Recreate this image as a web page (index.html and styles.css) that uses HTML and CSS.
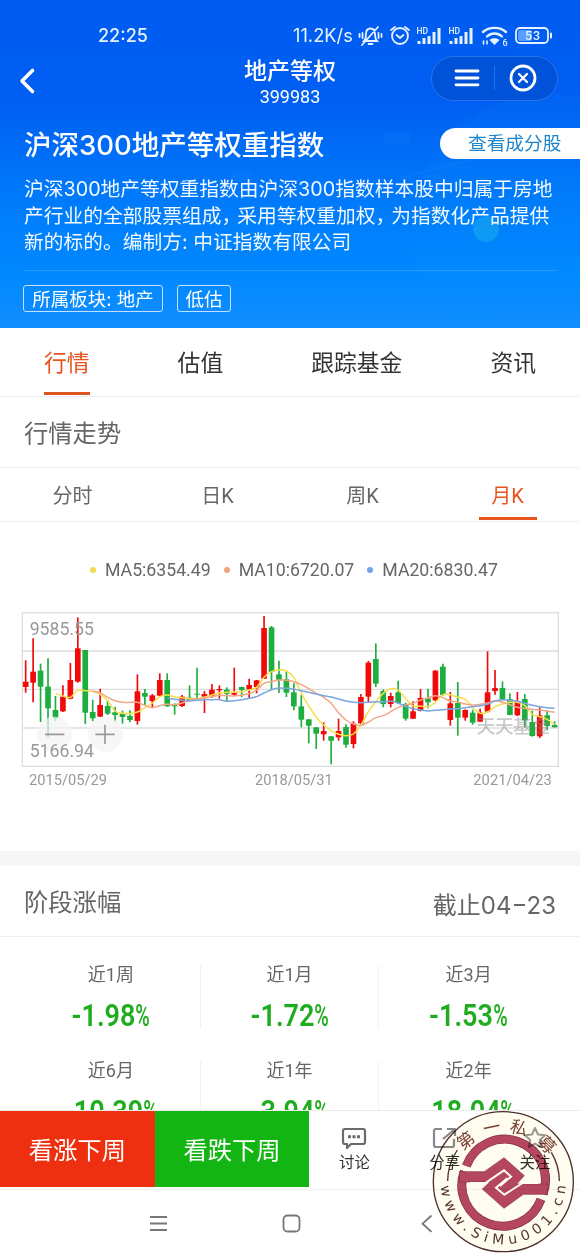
FILE: index.html
```html
<!DOCTYPE html>
<html lang="zh-CN">
<head>
    <meta charset="UTF-8">
    <meta name="viewport" content="width=device-width, initial-scale=1.0">
    <title>地产等权 399983</title>
    <link rel="stylesheet" href="styles.css">
</head>
<body>

    <header class="hero">
        <svg class="hero-bg" width="580" height="328" viewBox="0 0 580 328">
            <circle cx="548" cy="230" r="136" fill="#0a92ff" opacity="0.1"/>
            <circle cx="486" cy="229" r="13" fill="#12a4f0" opacity="0.7"/>
            <path d="M400 178L580 132" stroke="#2a90ff" stroke-width="1" opacity="0.3"/>
            <path d="M384 132h26v12h-26zM232 171h20v10h-20z" fill="#1480ff" opacity="0.2"/>
        </svg>

        <div class="status-bar">
            <span class="clock">22:25</span>
            <span class="speed">11.2K/s</span>
            <svg class="status-icons" width="200" height="24" viewBox="0 0 200 24" fill="none" stroke="#e6f2ff" stroke-width="1.8" stroke-linecap="round">
                <!-- muted bell -->
                <path d="M6 18c2-2 2-4 2-7 0-4 2-5.500 4.500-5.500S17 7 17 11c0 3 0 5 2 7zM10.500 21h4M4 22L20 4M4.500 10v5M1.500 11v3M20.500 10v5M23.500 11v3"/>
                <!-- alarm -->
                <circle cx="42" cy="13" r="8"/>
                <path d="M38.500 12l3.500 3 3.500-3M33 7l4-3M51 7l-4-3"/>
                <!-- signal -->
                <path stroke-width="3" stroke-linecap="butt" d="M61 21v-3M66 21v-6M71 21v-8M76 21V9M81 21V5M93 21v-3M98 21v-6M103 21v-8M108 21V9M113 21V5"/>
                <!-- wifi -->
                <path stroke-width="2.400" d="M125 9c6-5.500 17-5.500 23 0M129 13.500c4-4 11-4 15 0"/>
                <path stroke="none" fill="#e6f2ff" d="M131.500 17c2.500-2.500 7.500-2.500 10 0L136.500 22z"/>
                <path stroke-width="1.600" d="M125.500 18v3M129 21v-3"/>
                <!-- battery -->
                <rect x="158" y="5" width="32" height="15" rx="4"/>
                <rect x="160" y="7" width="14" height="11" rx="2" fill="#5b9dff" stroke="none"/>
                <path d="M193 10.500v4" stroke-width="2"/>
                <g class="status-text" stroke="none" fill="#e6f2ff">
                    <text x="58.500" y="10.500" font-size="8.500">HD</text>
                    <text x="90.500" y="10.500" font-size="8.500">HD</text>
                    <text x="144.500" y="22.500" font-size="9">6</text>
                    <text x="167" y="17" font-size="12.500" textLength="15">53</text>
                </g>
            </svg>
        </div>

        <div class="nav">
            <svg class="back" width="18" height="28" viewBox="0 0 18 28" fill="none" stroke="#fff" stroke-width="3.600" stroke-linecap="round" stroke-linejoin="round">
                <path d="M14.500 3.500L4 14l10.500 10.500"/>
            </svg>
            <div class="nav-title">
                <h1>地产等权</h1>
                <p>399983</p>
            </div>
            <div class="capsule">
                <svg width="26" height="18" viewBox="0 0 26 18" stroke="#fff" stroke-width="2.800" stroke-linecap="round">
                    <path d="M2 2h22M2 9h22M2 15.800h22"/>
                </svg>
                <i></i>
                <svg width="28" height="28" viewBox="0 0 28 28" fill="none" stroke="#fff" stroke-linecap="round">
                    <circle cx="14" cy="14" r="12" stroke-width="2.800"/>
                    <path d="M10 10l8 8M18 10l-8 8" stroke-width="2.200"/>
                </svg>
            </div>
        </div>

        <div class="index-head">
            <h2>沪深300地产等权重指数</h2>
            <a class="stocks-btn">查看成分股</a>
        </div>
        <p class="desc">沪深300地产等权重指数由沪深300指数样本股中归属于房地<br>产行业的全部股票组成<span class="comma">，</span>采用等权重加权<span class="comma">，</span>为指数化产品提供<br>新的标的。编制方: 中证指数有限公司</p>
        <div class="tags">
            <span class="tag tag-plate">所属板块: 地产</span>
            <span class="tag tag-low">低估</span>
        </div>
    </header>

    <nav class="tabs">
        <a class="active">行情</a>
        <a>估值</a>
        <a>跟踪基金</a>
        <a>资讯</a>
    </nav>

    <section class="trend">
        <h3>行情走势</h3>
        <div class="periods">
            <a>分时</a>
            <a>日K</a>
            <a>周K</a>
            <a class="active"><span>月K</span></a>
        </div>
        <div class="legend">
            <span class="ma5">MA5:6354.49</span>
            <span class="ma10">MA10:6720.07</span>
            <span class="ma20">MA20:6830.47</span>
        </div>
        <svg class="chart" width="580" height="200" viewBox="0 0 1740 600">
            <g stroke="#dedede" stroke-width="4" fill="none">
                <rect x="67" y="38" width="1608" height="461"/>
                <path d="M67 153H1675M67 268H1675M67 384H1675"/>
            </g>
            <g id="candles"></g>
            <g id="lines" fill="none" stroke-width="4.500" stroke-linejoin="round"></g>
            <g stroke="#999" stroke-width="5">
                <circle cx="163" cy="403" r="53" fill="#f4f4f4" fill-opacity="0.7" stroke="none"/>
                <circle cx="315" cy="403" r="53" fill="#f4f4f4" fill-opacity="0.7" stroke="none"/>
                <path d="M135 403h58M286 403h58M315 374v58"/>
            </g>
            <g class="axis">
                <text x="89" y="104" font-size="54" textLength="193" lengthAdjust="spacingAndGlyphs">9585.55</text>
                <text x="89" y="472" font-size="54" textLength="193" lengthAdjust="spacingAndGlyphs">5166.94</text>
            </g>
            <text class="brand" x="1430" y="398" font-size="56" textLength="220">天天基金</text>
            <g class="dates">
                <text x="87" y="556" font-size="44" textLength="234">2015/05/29</text>
                <text x="765" y="556" font-size="44" textLength="233">2018/05/31</text>
                <text x="1420" y="556" font-size="44" textLength="235">2021/04/23</text>
            </g>
        </svg>
    </section>

    <section class="stage">
        <div class="stage-head">
            <h3>阶段涨幅</h3>
            <span>截止04−23</span>
        </div>
        <div class="stage-grid">
            <div class="cell"><p>近1周</p><b>-1.98<i>%</i></b></div>
            <div class="cell"><p>近1月</p><b>-1.72<i>%</i></b></div>
            <div class="cell"><p>近3月</p><b>-1.53<i>%</i></b></div>
            <div class="cell"><p>近6月</p><b>-10.39<i>%</i></b></div>
            <div class="cell"><p>近1年</p><b>-3.94<i>%</i></b></div>
            <div class="cell"><p>近2年</p><b>-18.04<i>%</i></b></div>
        </div>
    </section>

    <footer class="bottom">
        <div class="actions">
            <button class="vote up">看涨下周</button>
            <button class="vote down">看跌下周</button>
            <a class="action">
                <svg width="28" height="26" viewBox="0 0 28 26" fill="none" stroke="#6b6b6b" stroke-width="2.200" stroke-linejoin="round">
                    <path d="M5 4h18a2 2 0 0 1 2 2v11a2 2 0 0 1-2 2H11l-4 4v-4H5a2 2 0 0 1-2-2V6a2 2 0 0 1 2-2z"/>
                    <path d="M8 11.800h3M12.500 11.800h3M17 11.800h3" stroke-width="3"/>
                </svg>
                讨论
            </a>
            <a class="action">
                <svg width="28" height="26" viewBox="0 0 28 26" fill="none" stroke="#888" stroke-width="2.200" stroke-linejoin="round">
                    <path d="M11 4H5a2 2 0 0 0-2 2v14a2 2 0 0 0 2 2h16a2 2 0 0 0 2-2v-6M16 4h8v7M24 4L12 14"/>
                </svg>
                分享
            </a>
            <a class="action">
                <svg width="28" height="26" viewBox="0 0 28 26" fill="none" stroke="#999" stroke-width="2" stroke-linejoin="round">
                    <path d="M14 3l3 6.500 7 .8-5.200 4.800 1.400 7L14 18.600 7.800 22l1.400-7L4 10.300l7-.8z"/>
                </svg>
                关注
            </a>
        </div>
        <div class="sys-nav">
            <svg width="580" height="67" viewBox="0 0 580 67" fill="none" stroke="#777" stroke-width="1.800">
                <path d="M150 27h17M150 33.500h17M150 40h17"/>
                <rect x="283.500" y="25.500" width="16" height="16" rx="4"/>
                <path d="M431.500 25.500l-9 8.200 9 8.200"/>
            </svg>
        </div>
    </footer>

    <svg class="seal" width="160" height="162" viewBox="0 0 480 486">
        <defs>
            <path id="seal-arc" d="M62 260A188 188 0 0 0 438 260"/>
        </defs>
        <circle cx="250" cy="260" r="210" fill="#fffdf0" stroke="#4c2f2a" stroke-width="4"/>
        <path d="M83 258A168 168 0 0 1 112 165M418 258A168 168 0 0 0 394 172" fill="none" stroke="#4c2f2a" stroke-width="4"/>
        <!-- coin: ring halves, then the band with the diamond -->
        <g fill="none" stroke="#7c3043" stroke-width="27">
            <path d="M139 213A122 122 0 0 1 369 297"/>
            <path d="M363 313A122 122 0 0 1 133 229"/>
        </g>
        <g fill="none" stroke="#b4475f" stroke-width="23">
            <path d="M139 213A122 122 0 0 1 369 297"/>
            <path d="M363 313A122 122 0 0 1 133 229"/>
        </g>
        <path fill="#b4475f" stroke="#8a354a" stroke-width="2" d="M119 230H193L252 188L313 242L290 267H385L382 298H310L252 340L187 282L210 261H118Z"/>
        <g fill="none" stroke="#fffdf0" stroke-width="6">
            <path d="M150 264H196L252 226L273 245L240 273"/>
            <path d="M356 264H308L253 299L228 278L262 250"/>
        </g>
        <g class="seal-cn">
            <text transform="translate(137 136) rotate(-38)" y="19">第</text>
            <text transform="translate(215 97) rotate(-12)" y="19">一</text>
            <text transform="translate(297 98) rotate(15)" y="19">私</text>
            <text transform="translate(381 149) rotate(45)" y="19">募</text>
        </g>
        <text class="seal-url"><textPath href="#seal-arc" startOffset="14" textLength="564">www.SiMu001.cn</textPath></text>
    </svg>

    <script src="chart.js"></script>
</body>
</html>
```

FILE: styles.css
```css
* {
    box-sizing: border-box;
    margin: 0;
    padding: 0;
}

body {
    width: 580px;
    height: 1257px;
    display: flex;
    flex-direction: column;
    overflow: hidden;
    position: relative;
    background: #fff;
    color: #333;
    font-family: Roboto, "Noto Sans CJK SC", sans-serif;
}

h1, h2, h3 {
    font-weight: 400;
}

/* Blue header */
.hero {
    height: 328px;
    flex: none;
    position: relative;
    color: #fff;
    background: linear-gradient(#005cf0 0, #005ef2 100px, #0078fa 190px, #0088ff 270px, #128eff 328px);
    font-family: Inter, "Noto Sans CJK SC", sans-serif;
}

.hero-bg {
    position: absolute;
    left: 0;
    top: 0;
}

.hero > div,
.hero > p {
    position: relative;
}

.status-bar {
    height: 56px;
    padding: 14px 0 0 98px;
    display: flex;
    align-items: center;
    color: #e6f2ff;
}

.clock {
    width: 195px;
    font-size: 18px;
    font-weight: 500;
}

.speed {
    width: 65px;
    font-size: 18.3px;
    white-space: nowrap;
}

.status-text {
    font-family: Roboto, sans-serif;
    font-weight: 500;
}

.nav {
    height: 46px;
    display: flex;
    align-items: center;
}

.back {
    margin: 4px 0 0 18px;
}

.nav-title {
    width: 200px;
    margin: 7px 0 0 154px;
    text-align: center;
}

.nav-title h1 {
    font-size: 23px;
    line-height: 28px;
    font-weight: 500;
}

.nav-title p {
    font-family: Roboto, sans-serif;
    font-size: 18px;
    line-height: 24px;
}

.capsule {
    width: 127px;
    height: 45px;
    margin: -2px 0 0 41px;
    padding: 0 20px 0 22px;
    display: flex;
    align-items: center;
    justify-content: space-between;
    border: 1px solid #2a73e8;
    border-radius: 23px;
    background: #0053d8;
}

.capsule i {
    width: 1px;
    height: 24px;
    background: #2a73e8;
}

.index-head {
    height: 74px;
    padding: 26px 0 0 24px;
    display: flex;
    justify-content: space-between;
    align-items: flex-start;
}

.index-head h2 {
    font-size: 27.5px;
    line-height: 34px;
    font-weight: 500;
}

.stocks-btn {
    width: 140px;
    height: 31px;
    padding-left: 28px;
    border-radius: 16px 0 0 16px;
    background: #fff;
    color: #1c86cc;
    font-size: 18.7px;
    line-height: 32px;
}

.desc {
    margin: 0 24px;
    height: 95px;
    border-bottom: 1px solid #2c9bff;
    font-size: 19.75px;
    line-height: 26.6px;
    white-space: nowrap;
    color: #f2f9ff;
}

.comma {
    letter-spacing: -4px;
}

.tags {
    padding: 14px 23px 0;
    display: flex;
    gap: 14px;
}

.tag {
    height: 27px;
    border: 1px solid #c4e2ff;
    border-radius: 3px;
    font-size: 18.5px;
    line-height: 27px;
    text-align: center;
    white-space: nowrap;
}

.tag-plate {
    width: 140px;
}

.tag-low {
    width: 54px;
}

/* Tabs */
.tabs {
    height: 69px;
    flex: none;
    padding: 0 44px;
    display: flex;
    justify-content: space-between;
    border-bottom: 1px solid #f0f0f0;
    font-size: 22.8px;
    line-height: 72px;
}

.tabs a {
    height: 67px;
    border-bottom: 3px solid transparent;
}

.tabs .active {
    color: #e8541e;
    border-color: #dc5420;
}

.trend {
    height: 454px;
    flex: none;
}

.trend h3 {
    height: 71px;
    padding-left: 24px;
    border-bottom: 1px solid #f0f0f0;
    color: #666;
    font-size: 24.3px;
    line-height: 73px;
}

.periods {
    height: 54px;
    display: flex;
    border-bottom: 1px solid #f0f0f0;
    color: #666;
    font-size: 20px;
    line-height: 57px;
}

.periods a {
    flex: 1;
    text-align: center;
}

.periods .active {
    color: #e8541e;
}

.periods span {
    width: 58px;
    height: 52px;
    display: inline-block;
    border-bottom: 3px solid #e8541e;
}

.legend {
    height: 78px;
    padding-left: 90px;
    display: flex;
    gap: 13px;
    color: #666;
    font-size: 17.7px;
}

.legend span {
    display: flex;
    align-items: center;
    gap: 9px;
    height: 96px;
}

.legend span::before {
    content: "";
    width: 6px;
    height: 6px;
    border-radius: 50%;
    background: #f2da50;
}

.legend .ma10::before {
    background: #f2a47c;
}

.legend .ma20::before {
    background: #72a4e6;
}

.chart {
    display: block;
}

.axis,
.dates {
    fill: #999;
}

.brand {
    fill: #888;
    opacity: 0.45;
    font-weight: 500;
}

/* Stage returns */
.stage {
    height: 259px;
    flex: none;
    overflow: hidden;
    border-top: 15px solid #f6f6f6;
}

.stage-head {
    height: 71px;
    padding: 0 24px;
    display: flex;
    justify-content: space-between;
    border-bottom: 1px solid #f0f0f0;
    color: #666;
}

.stage-head h3 {
    font-size: 24.3px;
    line-height: 74px;
}

.stage-head span {
    font-family: Inter, "Noto Sans CJK SC", sans-serif;
    font-size: 24px;
    line-height: 80px;
}

.stage-grid {
    padding: 28px 22px 0;
    display: grid;
    grid-template-columns: repeat(3, 1fr);
    grid-auto-rows: 64px;
    row-gap: 32px;
}

.cell {
    text-align: center;
    border-right: 1px solid #f2f2f2;
}

.cell:nth-child(3n) {
    border-right: none;
}

.cell p {
    color: #666;
    font-size: 18px;
    line-height: 19px;
}

.cell b {
    display: block;
    transform: scaleX(0.87);
    color: #1fad1f;
    font-size: 31px;
    line-height: 64px;
    font-weight: 600;
}

.cell i {
    display: inline-block;
    margin-right: -6px;
    transform: scaleX(0.73);
    transform-origin: left;
    font-style: normal;
    font-weight: 500;
}

/* Bottom bar */
.bottom {
    flex: none;
}

.actions {
    height: 80px;
    display: flex;
    border-top: 1px solid #eaeaea;
    border-bottom: 1px solid #f0f0f0;
}

.vote {
    width: 154.7px;
    height: 76px;
    padding-bottom: 2px;
    border: none;
    color: #fff;
    font-family: inherit;
    font-size: 24.3px;
}

.up {
    background: #ee3010;
}

.down {
    background: #12b512;
}

.action {
    flex: 1;
    padding-top: 14px;
    display: flex;
    flex-direction: column;
    align-items: center;
    font-size: 15.4px;
    line-height: 25px;
}

.sys-nav {
    height: 67px;
}

/* Round seal over the corner */
.seal {
    position: absolute;
    left: 420px;
    top: 1095px;
    mix-blend-mode: multiply;
}

.seal-cn {
    fill: #7a4032;
    font-size: 52px;
    text-anchor: middle;
}

.seal-url {
    fill: #54342c;
    font-family: "DejaVu Sans", sans-serif;
    font-size: 42px;
}
```

FILE: chart.js
```javascript
// high, low, body top, body bottom, r = red / g = green
const candles = [
    [181, 278, 245, 261, 'r'], [115, 307, 215, 248, 'r'], [191, 366, 212, 260, 'g'], [175, 411, 260, 325, 'g'],
    [288, 363, 330, 355, 'g'], [256, 336, 290, 334, 'r'], [189, 298, 240, 296, 'r'], [52, 248, 145, 245, 'r'],
    [150, 372, 150, 338, 'g'], [299, 363, 336, 355, 'g'], [266, 351, 315, 350, 'r'], [300, 345, 318, 341, 'g'],
    [320, 365, 337, 345, 'g'], [332, 371, 341, 351, 'g'], [331, 367, 348, 360, 'g'], [223, 374, 274, 363, 'r'],
    [267, 315, 279, 290, 'g'], [282, 323, 286, 303, 'r'], [220, 290, 240, 287, 'r'], [220, 320, 240, 319, 'g'],
    [310, 344, 314, 319, 'g'], [285, 321, 290, 318, 'r'], [256, 303, 293, 300, 'g'], [203, 296, 281, 284, 'g'],
    [273, 339, 282, 290, 'r'], [252, 294, 269, 288, 'r'], [256, 296, 267, 271, 'r'], [262, 304, 269, 282, 'g'],
    [203, 288, 279, 284, 'r'], [260, 291, 261, 270, 'g'], [236, 294, 255, 268, 'r'], [240, 280, 241, 261, 'r'],
    [48, 237, 84, 236, 'r'], [78, 269, 82, 216, 'g'], [182, 279, 223, 241, 'g'], [215, 291, 238, 278, 'g'],
    [250, 331, 277, 319, 'g'], [285, 382, 319, 359, 'g'], [357, 430, 358, 377, 'g'], [381, 447, 382, 401, 'g'],
    [367, 422, 393, 403, 'r'], [408, 493, 409, 422, 'g'], [356, 422, 393, 412, 'r'], [373, 443, 381, 434, 'g'],
    [364, 445, 371, 432, 'r'], [282, 372, 291, 370, 'r'], [183, 307, 188, 290, 'r'], [130, 261, 177, 251, 'g'],
    [268, 322, 273, 312, 'g'], [278, 322, 288, 312, 'r'], [242, 312, 277, 309, 'g'], [308, 362, 312, 356, 'g'],
    [304, 357, 334, 356, 'r'], [267, 334, 294, 333, 'r'], [266, 325, 295, 307, 'g'], [210, 303, 212, 301, 'r'],
    [191, 287, 200, 285, 'g'], [276, 377, 310, 360, 'r'], [246, 407, 309, 353, 'g'], [328, 362, 330, 353, 'r'],
    [329, 374, 338, 368, 'g'], [326, 366, 338, 365, 'r'], [154, 338, 277, 335, 'r'], [210, 284, 264, 273, 'r'],
    [244, 300, 264, 298, 'g'], [280, 346, 297, 345, 'g'], [276, 348, 303, 346, 'r'], [282, 382, 297, 361, 'g'],
    [332, 410, 366, 408, 'g'], [322, 414, 346, 409, 'r'], [331, 391, 346, 378, 'g'], [364, 382, 375, 382, 'g']
];

// one value per month, from the first month that has an average
const averages = [
    { start: 4, color: '#f5e04a', values: [280, 288, 292, 271, 272, 274, 283, 302, 333, 340, 341, 336, 323, 309, 290, 285, 291, 293, 296, 296, 292, 285, 279, 277, 276, 276, 270, 262, 232, 215, 209, 213, 232, 280, 318, 351, 375, 392, 403, 407, 402, 375, 335, 305, 280, 266, 270, 296, 318, 318, 320, 307, 284, 284, 292, 298, 322, 340, 336, 320, 312, 307, 307, 317, 343, 350, 358, 373] },
    { start: 9, color: '#f3a688', values: [274, 279, 292, 302, 307, 307, 307, 316, 323, 317, 313, 314, 309, 300, 297, 294, 290, 286, 287, 288, 285, 281, 270, 250, 245, 240, 241, 245, 254, 266, 280, 292, 310, 338, 360, 372, 376, 366, 353, 347, 335, 322, 315, 310, 300, 294, 287, 293, 303, 306, 312, 315, 313, 309, 302, 307, 314, 322, 325, 328, 330, 333, 337] },
    { start: 19, color: '#7ba6e0', values: [294, 298, 301, 303, 301, 299, 299, 299, 304, 302, 299, 295, 290, 279, 269, 264, 265, 268, 272, 277, 282, 287, 291, 297, 303, 307, 308, 307, 305, 305, 304, 309, 319, 326, 330, 333, 331, 329, 327, 326, 323, 320, 317, 313, 303, 300, 301, 304, 310, 316, 320, 323, 325] }
];

const xAt = i => 77 + i * 22.35;

document.getElementById('candles').innerHTML = candles.map(([high, low, top, bottom, side], i) => {
    const color = side === 'r' ? '#f00a0a' : '#1eae40';
    const x = xAt(i);
    return `<path d="M${x} ${high}V${low}" stroke="${color}" stroke-width="5"/>
            <rect x="${x - 8.5}" y="${top}" width="17" height="${bottom - top}" fill="${color}"/>`;
}).join('');

// Catmull-Rom spline through the points
function smooth(points) {
    let d = `M${points[0]}`;
    for (let i = 0; i < points.length - 1; i++) {
        const p0 = points[i - 1] || points[i];
        const p1 = points[i];
        const p2 = points[i + 1];
        const p3 = points[i + 2] || p2;
        d += `C${p1[0] + (p2[0] - p0[0]) / 6} ${p1[1] + (p2[1] - p0[1]) / 6} ${p2[0] - (p3[0] - p1[0]) / 6} ${p2[1] - (p3[1] - p1[1]) / 6} ${p2[0]} ${p2[1]}`;
    }
    return d;
}

document.getElementById('lines').innerHTML = averages.map(({ start, color, values }) =>
    `<path d="${smooth(values.map((y, i) => [xAt(start + i), y]))}" stroke="${color}"/>`
).join('');
```
